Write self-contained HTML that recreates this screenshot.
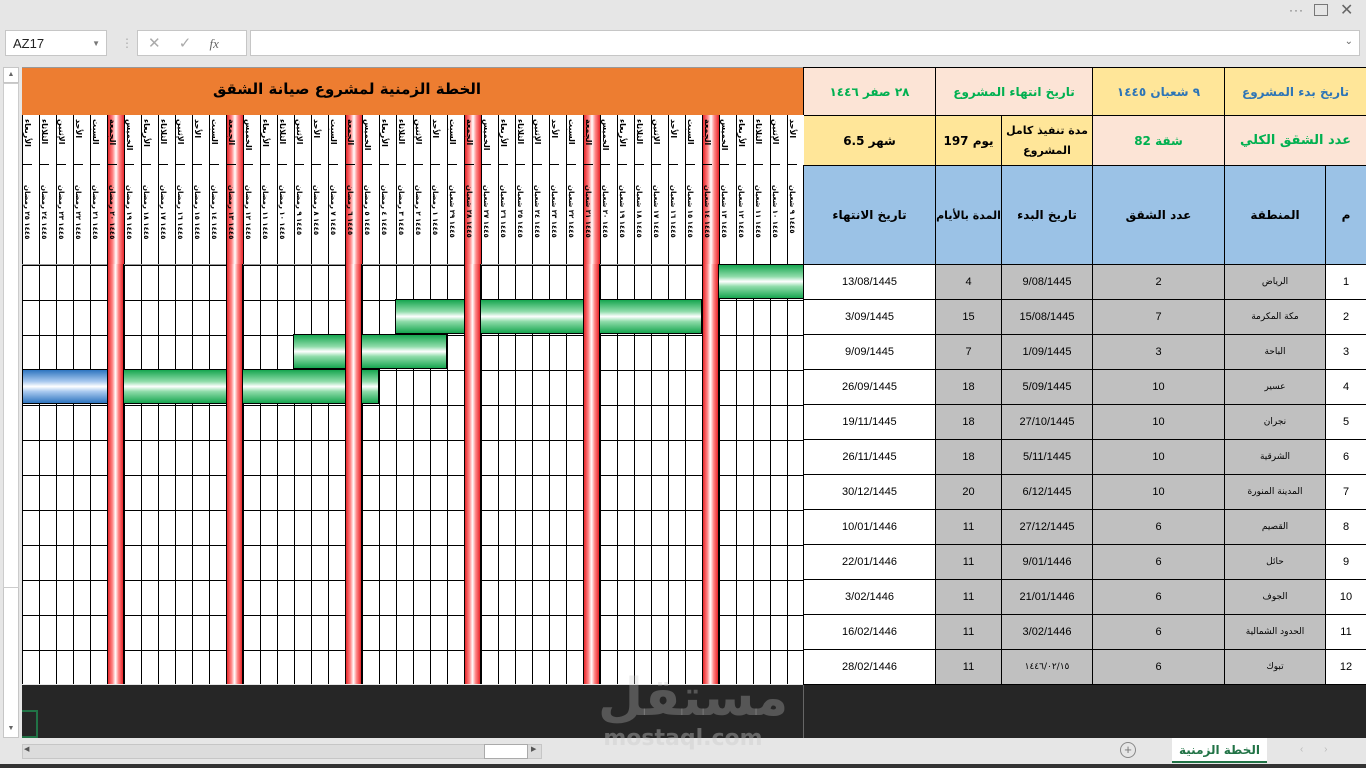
<!DOCTYPE html>
<html><head><meta charset="utf-8"><style>
*{margin:0;padding:0;box-sizing:border-box}
body{width:1366px;height:768px;overflow:hidden;background:#e6e6e6;font-family:"Liberation Sans","DejaVu Sans",sans-serif;position:relative}
.a{position:absolute}
.box{background:#fff;border:1px solid #c6c6c6}
#hdr{left:22px;top:115px;width:782px;height:149px;display:flex;background:#fff}
#hdr>div{width:17px;flex:none;border-left:1px solid #000;position:relative}
#hdr .d{height:50px;border-bottom:1px solid #000;writing-mode:vertical-rl;font:bold 8px "DejaVu Sans",sans-serif;display:flex;align-items:center;justify-content:flex-start;padding-top:4px;color:#000}
#hdr .t{height:99px;writing-mode:vertical-rl;font:bold 7px "DejaVu Sans",sans-serif;padding-top:20px;display:flex;align-items:center;color:#000}
.red{background:linear-gradient(90deg,#e8262a,#f88 30%,#fff 50%,#f88 70%,#e8262a)!important}
.g{height:35px;background:linear-gradient(180deg,#17a650,#8fdcaa 35%,#fff 50%,#8fdcaa 65%,#17a650);border:1px solid #000}
.b{height:35px;background:linear-gradient(180deg,#2e75c0,#a9c9ef 35%,#fff 50%,#a9c9ef 65%,#2e75c0);border:1px solid #000}
table{border-collapse:collapse;table-layout:fixed}
td{border:1px solid #000;text-align:center;font-size:11px;color:#000;overflow:hidden;background:#fff}
td.gr{background:#c0c0c0}
.ar{font-family:"DejaVu Sans",sans-serif;font-size:9px}
</style></head><body>
<div class="a" style="right:62px;top:3px;font-size:12px;color:#666;letter-spacing:1px">···</div>
<div class="a" style="left:1314px;top:4px;width:14px;height:12px;border:1px solid #777"></div>
<div class="a" style="left:1340px;top:0px;font-size:16px;color:#666">✕</div>
<div class="a box" style="left:5px;top:30px;width:102px;height:26px;font-size:13px;padding:5px 7px;color:#222">AZ17<span style="position:absolute;right:6px;top:8px;font-size:8px;color:#777">▼</span></div>
<div class="a" style="left:121px;top:36px;color:#aaa;font-size:12px">⋮</div>
<div class="a box" style="left:137px;top:30px;width:110px;height:26px;color:#aaa;font-size:15px;padding:3px 10px;word-spacing:14px">✕ ✓ <i style="font-family:'Liberation Serif';color:#666;font-size:13px">fx</i></div>
<div class="a box" style="left:250px;top:30px;width:1110px;height:26px"><span style="position:absolute;right:6px;top:5px;font-size:10px;color:#666">⌄</span></div>
<div class="a" style="left:3px;top:67px;width:16px;height:671px;background:#fff;border:1px solid #c6c6c6"></div>
<div class="a" style="left:3px;top:67px;width:16px;height:16px;background:#fff;border:1px solid #c6c6c6;font-size:7px;text-align:center;color:#666;line-height:14px">▲</div>
<div class="a" style="left:3px;top:83px;width:16px;height:505px;background:#fff;border:1px solid #ccc"></div>
<div class="a" style="left:3px;top:722px;width:16px;height:16px;font-size:7px;text-align:center;color:#666;line-height:14px">▼</div>
<div class="a" style="left:22px;top:67px;width:781px;height:48px;background:#ed7d31;border-top:1px solid #999"><div style="position:absolute;left:110px;width:430px;top:12px;text-align:center;font:bold 15px 'DejaVu Sans',sans-serif;color:#000" dir="rtl">الخطة الزمنية لمشروع صيانة الشقق</div></div>
<div class="a" style="left:803px;top:67px;width:563px;height:98px">
<table style="width:563px;height:98px">
<colgroup><col style="width:132px"><col style="width:66px"><col style="width:91px"><col style="width:132px"><col style="width:142px"></colgroup>
<tr style="height:48px"><td style="background:#fce4d6;color:#00b050;font:bold 12px 'DejaVu Sans'">٢٨ صفر ١٤٤٦</td><td colspan="2" style="background:#fce4d6;color:#00b050;font:bold 12px 'DejaVu Sans'">تاريخ انتهاء المشروع</td><td style="background:#ffe699;color:#2e75b6;font:bold 12px 'DejaVu Sans'">٩ شعبان ١٤٤٥</td><td style="background:#ffe699;color:#2e75b6;font:bold 12px 'DejaVu Sans'">تاريخ بدء المشروع</td></tr>
<tr style="height:50px"><td style="background:#ffe699;font:bold 12px 'DejaVu Sans'">6.5 شهر</td><td style="background:#ffe699;font:bold 12px 'DejaVu Sans'">197 يوم</td><td style="background:#ffe699;font:bold 11px 'DejaVu Sans';line-height:20px">مدة تنفيذ كامل المشروع</td><td style="background:#fce4d6;color:#00b050;font:bold 12px 'DejaVu Sans'">82 شقة</td><td style="background:#fce4d6;color:#00b050;font:bold 13px 'DejaVu Sans'">عدد الشقق الكلي</td></tr>
</table></div>
<div class="a" id="hdr">
<div><div class="d">الأربعاء</div><div class="t">١٤٤٥ ٢٥ رمضان</div></div>
<div><div class="d">الثلاثاء</div><div class="t">١٤٤٥ ٢٤ رمضان</div></div>
<div><div class="d">الإثنين</div><div class="t">١٤٤٥ ٢٣ رمضان</div></div>
<div><div class="d">الأحد</div><div class="t">١٤٤٥ ٢٢ رمضان</div></div>
<div><div class="d">السبت</div><div class="t">١٤٤٥ ٢١ رمضان</div></div>
<div class="red"><div class="d">الجمعة</div><div class="t">١٤٤٥ ٢٠ رمضان</div></div>
<div><div class="d">الخميس</div><div class="t">١٤٤٥ ١٩ رمضان</div></div>
<div><div class="d">الأربعاء</div><div class="t">١٤٤٥ ١٨ رمضان</div></div>
<div><div class="d">الثلاثاء</div><div class="t">١٤٤٥ ١٧ رمضان</div></div>
<div><div class="d">الإثنين</div><div class="t">١٤٤٥ ١٦ رمضان</div></div>
<div><div class="d">الأحد</div><div class="t">١٤٤٥ ١٥ رمضان</div></div>
<div><div class="d">السبت</div><div class="t">١٤٤٥ ١٤ رمضان</div></div>
<div class="red"><div class="d">الجمعة</div><div class="t">١٤٤٥ ١٣ رمضان</div></div>
<div><div class="d">الخميس</div><div class="t">١٤٤٥ ١٢ رمضان</div></div>
<div><div class="d">الأربعاء</div><div class="t">١٤٤٥ ١١ رمضان</div></div>
<div><div class="d">الثلاثاء</div><div class="t">١٤٤٥ ١٠ رمضان</div></div>
<div><div class="d">الإثنين</div><div class="t">١٤٤٥ ٩ رمضان</div></div>
<div><div class="d">الأحد</div><div class="t">١٤٤٥ ٨ رمضان</div></div>
<div><div class="d">السبت</div><div class="t">١٤٤٥ ٧ رمضان</div></div>
<div class="red"><div class="d">الجمعة</div><div class="t">١٤٤٥ ٦ رمضان</div></div>
<div><div class="d">الخميس</div><div class="t">١٤٤٥ ٥ رمضان</div></div>
<div><div class="d">الأربعاء</div><div class="t">١٤٤٥ ٤ رمضان</div></div>
<div><div class="d">الثلاثاء</div><div class="t">١٤٤٥ ٣ رمضان</div></div>
<div><div class="d">الإثنين</div><div class="t">١٤٤٥ ٢ رمضان</div></div>
<div><div class="d">الأحد</div><div class="t">١٤٤٥ ١ رمضان</div></div>
<div><div class="d">السبت</div><div class="t">١٤٤٥ ٢٩ شعبان</div></div>
<div class="red"><div class="d">الجمعة</div><div class="t">١٤٤٥ ٢٨ شعبان</div></div>
<div><div class="d">الخميس</div><div class="t">١٤٤٥ ٢٧ شعبان</div></div>
<div><div class="d">الأربعاء</div><div class="t">١٤٤٥ ٢٦ شعبان</div></div>
<div><div class="d">الثلاثاء</div><div class="t">١٤٤٥ ٢٥ شعبان</div></div>
<div><div class="d">الإثنين</div><div class="t">١٤٤٥ ٢٤ شعبان</div></div>
<div><div class="d">الأحد</div><div class="t">١٤٤٥ ٢٣ شعبان</div></div>
<div><div class="d">السبت</div><div class="t">١٤٤٥ ٢٢ شعبان</div></div>
<div class="red"><div class="d">الجمعة</div><div class="t">١٤٤٥ ٢١ شعبان</div></div>
<div><div class="d">الخميس</div><div class="t">١٤٤٥ ٢٠ شعبان</div></div>
<div><div class="d">الأربعاء</div><div class="t">١٤٤٥ ١٩ شعبان</div></div>
<div><div class="d">الثلاثاء</div><div class="t">١٤٤٥ ١٨ شعبان</div></div>
<div><div class="d">الإثنين</div><div class="t">١٤٤٥ ١٧ شعبان</div></div>
<div><div class="d">الأحد</div><div class="t">١٤٤٥ ١٦ شعبان</div></div>
<div><div class="d">السبت</div><div class="t">١٤٤٥ ١٥ شعبان</div></div>
<div class="red"><div class="d">الجمعة</div><div class="t">١٤٤٥ ١٤ شعبان</div></div>
<div><div class="d">الخميس</div><div class="t">١٤٤٥ ١٣ شعبان</div></div>
<div><div class="d">الأربعاء</div><div class="t">١٤٤٥ ١٢ شعبان</div></div>
<div><div class="d">الثلاثاء</div><div class="t">١٤٤٥ ١١ شعبان</div></div>
<div><div class="d">الإثنين</div><div class="t">١٤٤٥ ١٠ شعبان</div></div>
<div><div class="d">الأحد</div><div class="t">١٤٤٥ ٩ شعبان</div></div>
</div>
<div class="a" style="left:22px;top:264px;width:782px;height:420px;background-color:#fff;background-image:repeating-linear-gradient(90deg,#000 0 1px,transparent 1px 17px),repeating-linear-gradient(180deg,#000 0 1px,transparent 1px 35px);border-top:1px solid #999"></div>
<div class="a g" style="left:718px;top:264px;width:86px"></div>
<div class="a g" style="left:395px;top:299px;width:307px"></div>
<div class="a g" style="left:293px;top:334px;width:154px"></div>
<div class="a g" style="left:123px;top:369px;width:256px"></div>
<div class="a b" style="left:22px;top:369px;width:86px"></div>
<div class="a red" style="left:107px;top:264px;width:17px;height:420px;border-left:1px solid #000;border-right:1px solid #000"></div>
<div class="a red" style="left:226px;top:264px;width:17px;height:420px;border-left:1px solid #000;border-right:1px solid #000"></div>
<div class="a red" style="left:345px;top:264px;width:17px;height:420px;border-left:1px solid #000;border-right:1px solid #000"></div>
<div class="a red" style="left:464px;top:264px;width:17px;height:420px;border-left:1px solid #000;border-right:1px solid #000"></div>
<div class="a red" style="left:583px;top:264px;width:17px;height:420px;border-left:1px solid #000;border-right:1px solid #000"></div>
<div class="a red" style="left:702px;top:264px;width:17px;height:420px;border-left:1px solid #000;border-right:1px solid #000"></div>
<div class="a" style="left:803px;top:165px;width:563px">
<table style="width:563px">
<colgroup><col style="width:132px"><col style="width:66px"><col style="width:91px"><col style="width:132px"><col style="width:101px"><col style="width:41px"></colgroup>
<tr style="height:99px"><td style="background:#9bc2e6;font:bold 12px 'DejaVu Sans'">تاريخ الانتهاء</td><td style="background:#9bc2e6;font:bold 11px 'DejaVu Sans'">المدة بالأيام</td><td style="background:#9bc2e6;font:bold 12px 'DejaVu Sans'">تاريخ البدء</td><td style="background:#9bc2e6;font:bold 12px 'DejaVu Sans'">عدد الشقق</td><td style="background:#9bc2e6;font:bold 12px 'DejaVu Sans'">المنطقة</td><td style="background:#9bc2e6;font:bold 12px 'DejaVu Sans'">م</td></tr>
<tr style="height:35px"><td>13/08/1445</td><td class="gr">4</td><td class="gr">9/08/1445</td><td class="gr">2</td><td class="gr ar">الرياض</td><td>1</td></tr>
<tr style="height:35px"><td>3/09/1445</td><td class="gr">15</td><td class="gr">15/08/1445</td><td class="gr">7</td><td class="gr ar">مكة المكرمة</td><td>2</td></tr>
<tr style="height:35px"><td>9/09/1445</td><td class="gr">7</td><td class="gr">1/09/1445</td><td class="gr">3</td><td class="gr ar">الباحة</td><td>3</td></tr>
<tr style="height:35px"><td>26/09/1445</td><td class="gr">18</td><td class="gr">5/09/1445</td><td class="gr">10</td><td class="gr ar">عسير</td><td>4</td></tr>
<tr style="height:35px"><td>19/11/1445</td><td class="gr">18</td><td class="gr">27/10/1445</td><td class="gr">10</td><td class="gr ar">نجران</td><td>5</td></tr>
<tr style="height:35px"><td>26/11/1445</td><td class="gr">18</td><td class="gr">5/11/1445</td><td class="gr">10</td><td class="gr ar">الشرقية</td><td>6</td></tr>
<tr style="height:35px"><td>30/12/1445</td><td class="gr">20</td><td class="gr">6/12/1445</td><td class="gr">10</td><td class="gr ar">المدينة المنورة</td><td>7</td></tr>
<tr style="height:35px"><td>10/01/1446</td><td class="gr">11</td><td class="gr">27/12/1445</td><td class="gr">6</td><td class="gr ar">القصيم</td><td>8</td></tr>
<tr style="height:35px"><td>22/01/1446</td><td class="gr">11</td><td class="gr">9/01/1446</td><td class="gr">6</td><td class="gr ar">حائل</td><td>9</td></tr>
<tr style="height:35px"><td>3/02/1446</td><td class="gr">11</td><td class="gr">21/01/1446</td><td class="gr">6</td><td class="gr ar">الجوف</td><td>10</td></tr>
<tr style="height:35px"><td>16/02/1446</td><td class="gr">11</td><td class="gr">3/02/1446</td><td class="gr">6</td><td class="gr ar">الحدود الشمالية</td><td>11</td></tr>
<tr style="height:35px"><td>28/02/1446</td><td class="gr">11</td><td class="gr ar">١٤٤٦/٠٢/١٥</td><td class="gr">6</td><td class="gr ar">تبوك</td><td>12</td></tr>
</table></div>
<div class="a" style="left:22px;top:685px;width:1344px;height:53px;background:#262626"></div>
<div class="a" style="left:803px;top:685px;width:1px;height:53px;background:#666"></div>
<div class="a" style="left:22px;top:710px;width:16px;height:28px;border:2px solid #217346;border-left:none"></div>
<div class="a" style="left:598px;top:668px;width:170px;text-align:center;font:bold 52px 'DejaVu Sans',sans-serif;color:rgba(200,200,200,0.3);line-height:60px">مستقل</div>
<div class="a" style="left:598px;top:726px;width:170px;text-align:center;font:bold 22px 'DejaVu Sans',sans-serif;color:rgba(200,200,200,0.4)">mostaql.com</div>
<div class="a" style="left:22px;top:744px;width:520px;height:15px;background:#dcdcdc;border:1px solid #c6c6c6"></div>
<div class="a" style="left:24px;top:745px;font-size:7px;color:#555">◀</div>
<div class="a" style="left:484px;top:744px;width:44px;height:15px;background:#fff;border:1px solid #aaa"></div>
<div class="a" style="left:531px;top:745px;font-size:7px;color:#555">▶</div>
<div class="a" style="left:1120px;top:742px;width:16px;height:16px;border:1px solid #888;border-radius:50%;font-size:13px;line-height:13px;text-align:center;color:#777">+</div>
<div class="a" style="left:1172px;top:738px;width:95px;height:25px;background:#fff;border-bottom:2px solid #217346;text-align:center;font:bold 12px 'DejaVu Sans',sans-serif;color:#217346;line-height:24px">الخطة الزمنية</div>
<div class="a" style="left:1300px;top:744px;font-size:10px;color:#bbb;word-spacing:18px">‹ ›</div>
<div class="a" style="left:0;top:764px;width:1366px;height:4px;background:#333"></div>
</body></html>
